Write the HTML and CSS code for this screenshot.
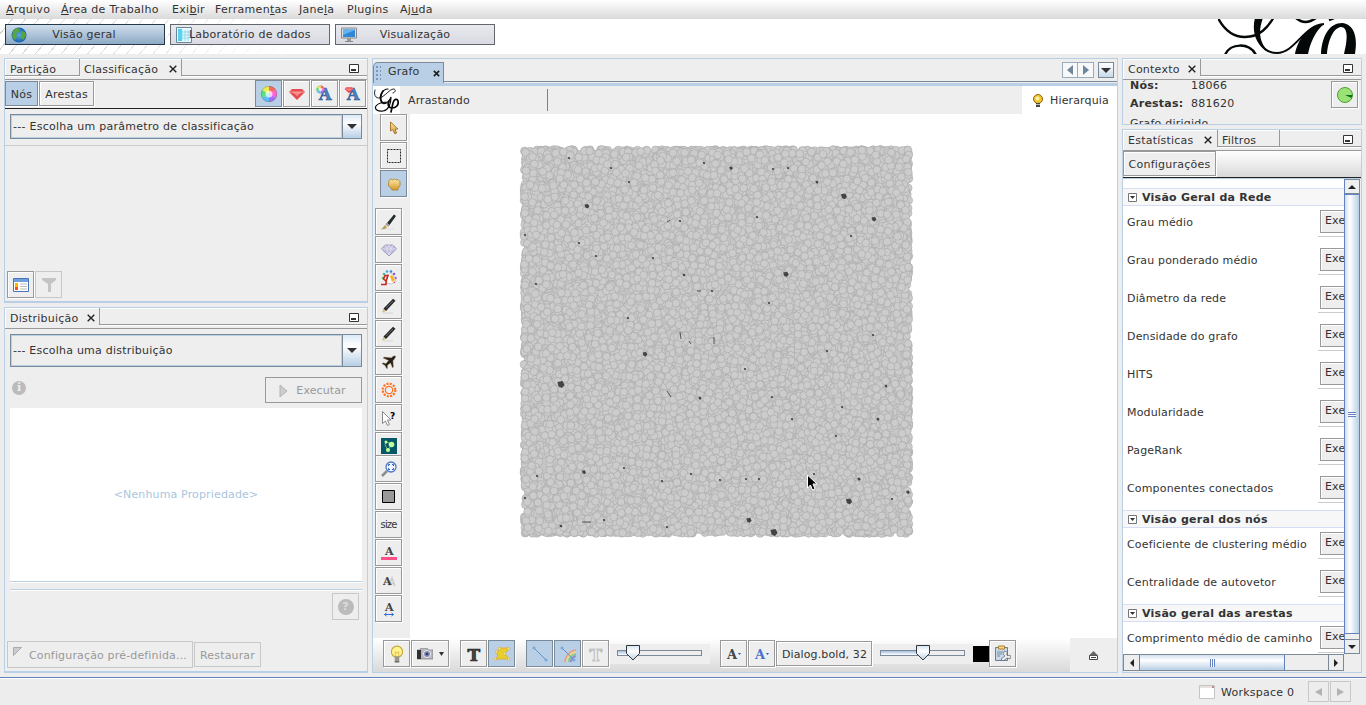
FILE: index.html
```html
<!DOCTYPE html>
<html lang="pt">
<head>
<meta charset="utf-8">
<title>Gephi</title>
<link rel="stylesheet" href="styles.css">
</head>
<body>
<svg class="sprite" width="0" height="0">
  <defs>
    <linearGradient id="gold" x1="0" y1="0" x2="0" y2="1"><stop offset="0" stop-color="#fbe9a8"/><stop offset="1" stop-color="#d39a2c"/></linearGradient>
    <linearGradient id="thumb" x1="0" y1="0" x2="0" y2="1"><stop offset="0" stop-color="#d4e3f2"/><stop offset=".4" stop-color="#fff"/><stop offset="1" stop-color="#b8cfe5"/></linearGradient>
    <radialGradient id="globe"><stop offset="0" stop-color="#58a8ea"/><stop offset="1" stop-color="#1762ad"/></radialGradient>
  </defs>
  <symbol id="pencil" viewBox="0 0 16 16"><path d="M2 15h10" stroke="#d5d5d5"/><path d="M1 14.500l1.500-4 2.500 2.500z" fill="#d8bd72"/><path d="M2.500 10.500L12 .8l2.500 2L5 13z" fill="#282a2c"/><path d="M5 10l7-7" stroke="#666"/></symbol>
  <symbol id="bulb" viewBox="0 0 16 16"><circle cx="8" cy="6" r="5" fill="#fff38b" stroke="#c5a83e"/><path d="M6 10h4v5H6z" fill="#99978c"/><path d="M6.500 10V6l1.500 1 1.500-1v4" fill="none" stroke="#e0b040" stroke-width=".7"/><path d="M6 15h4" stroke="#555"/></symbol>
  <symbol id="darkbulb" viewBox="0 0 14 14"><circle cx="7" cy="5" r="4.500" fill="#f3c42d" stroke="#8d6711"/><circle cx="6.500" cy="4.500" r="2" fill="#fff2a0"/><path d="M5 9h4v4H5z" fill="#484848"/><path d="M5 10.500h4" stroke="#bbb"/></symbol>
  <symbol id="wheel" viewBox="0 0 18 18"><path fill="#ff655e" d="M9 9V1a8 8 0 0 1 7 4z"/><path fill="#ff60dc" d="M9 9l7-4a8 8 0 0 1 0 8z"/><path fill="#a66cff" d="M9 9l7 4a8 8 0 0 1-7 4z"/><path fill="#59bfff" d="M9 9v8a8 8 0 0 1-7-4z"/><path fill="#51e581" d="M9 9l-7 4a8 8 0 0 1 0-8z"/><path fill="#eaf04d" d="M9 9L2 5a8 8 0 0 1 7-4z"/><circle cx="9" cy="9" r="3.500" fill="#fff" opacity=".7"/><circle cx="9" cy="9" r="7.700" fill="none" stroke="#777" stroke-width=".5"/></symbol>
  <symbol id="ruby" viewBox="0 0 18 18"><path d="M4 4h10l3 3-8 8-8-8z" fill="#e84b50"/><path d="M4 7h10l-5 4z" fill="#f58a86"/><path d="M1.500 7h15" stroke="#ffc0b8" fill="none" stroke-width=".7"/></symbol>
  <symbol id="minwin" viewBox="0 0 10 9"><path d="M.5.5h9v8h-9z" fill="#fff" stroke="#333"/><path d="M2 6h5" stroke="#333" stroke-width="2"/></symbol>
  <symbol id="cross" viewBox="0 0 8 8"><path d="M.7.7l6.600 6.600M7.300.7L.7 7.300" stroke="#222" stroke-width="1.400"/></symbol>
  <symbol id="down" viewBox="0 0 10 5"><path d="M0 0h10L5 5z" fill="#333"/></symbol>
  <symbol id="slider" viewBox="0 0 16 17"><path d="M1.500 1.500h13v8L8 16 1.500 9.500z" fill="url(#thumb)" stroke="#30363c"/></symbol>
  <symbol id="fold" viewBox="0 0 9 9"><path d="M.5.5h8v8h-8z" fill="#fff" stroke="#777"/><path d="M2 3h5L4.500 6z" fill="#333"/></symbol>
</svg>

<nav class="menu"><span class="m1"><u>A</u>rquivo</span><span class="m2"><u>Á</u>rea de Trabalho</span><span class="m3">Exi<u>b</u>ir</span><span class="m4">Ferramen<u>t</u>as</span><span class="m5">Jane<u>l</u>a</span><span class="m6">Plugins</span><span class="m7">Aj<u>u</u>da</span></nav>

<header class="banner">
  <div class="perspective active"><svg width="16" height="16" viewBox="0 0 16 16"><circle cx="8" cy="8" r="7.500" fill="url(#globe)"/><path d="M2 4l3-3 4 1-1 3-3 2 1 3-2 3-3-3z M10 4l4 1 1 4-3 4-3-3 2-2z" fill="#58a63f"/></svg><span>Visão geral</span></div>
  <div class="perspective"><svg width="16" height="16" viewBox="0 0 16 16"><path d="M.5.500h15v15H.5z" fill="#e8faff" stroke="#6a8796"/><path d="M2 2h4v12H2z" fill="#4fcdf2"/><path d="M6 3v11M9 3v11M12 3v11M2 5h12M2 8h12M2 11h12" stroke="#7fd5eb" stroke-width=".8"/></svg><span>Laboratório de dados</span></div>
  <div class="perspective"><svg width="16" height="16" viewBox="0 0 16 16"><path d="M.5 1h15v10H.5z" fill="#ddd" stroke="#888"/><path d="M2 2h12v8H2z" fill="#2e88d5"/><path d="M2 8l12-5V2H2z" fill="#67b4ee"/><path d="M6 11h4v3H6z" fill="#999"/><path d="M4 14.500h8" stroke="#888"/></svg><span>Visualização</span></div>
  <svg class="brand" width="148" height="35" viewBox="0 0 148 35" fill="none" stroke="#050808">
    <path d="M0-1Q10 18 27 18C42 18 50 8 56-2" stroke-width="2.300"/>
    <path d="M40-2C34 14 42 34 59 34C77 34 86 6 106 5" stroke-width="2"/>
    <path d="M37-1H45C40 12 41 24 51 33C36 26 34 10 37-1z" fill="#050808" stroke="none"/>
    <path d="M7 36C12 24 31 23 38 36" stroke-width="2.500"/>
    <path d="M78-1Q87 7 98-1M111 1l5-2" stroke-width="2.500"/>
    <path d="M77 35C80 19 91 7 106 5C97 12 92 25 90 35z" fill="#050808" stroke="none"/>
    <path d="M103 35C104 16 112 4 124 4C136 5 140 18 137 35H126C130 20 130 8 123 8C115 9 110 22 109 35z" fill="#050808" stroke="none"/>
  </svg>
</header>

<main class="workspace">
  <div class="col left">
    <section class="panel ranking">
      <div class="tabs"><div class="tab off t-part"><span>Partição</span></div><div class="tab t-class"><span>Classificação</span><svg width="8" height="8"><use href="#cross"/></svg></div><div class="tabfill"><svg width="10" height="9"><use href="#minwin"/></svg></div></div>
      <div class="modes"><button class="btn on nos">Nós</button><button class="btn arestas">Arestas</button><i class="grow"></i>
        <button class="btn ic on"><svg width="18" height="18"><use href="#wheel"/></svg></button><button class="btn ic"><svg width="18" height="18"><use href="#ruby"/></svg></button><button class="btn ic"><svg width="20" height="20" viewBox="0 0 20 20"><text x="4" y="16" class="bigA">A</text><use href="#wheel" x="1" y="1" width="9" height="9"/></svg></button><button class="btn ic"><svg width="20" height="20" viewBox="0 0 20 20"><text x="4" y="16" class="bigA">A</text><use href="#ruby" x="1" y="1" width="10" height="10"/></svg></button></div>
      <div class="combo c1"><span>--- Escolha um parâmetro de classificação</span><i><svg width="10" height="5"><use href="#down"/></svg></i></div>
      <div class="rankbody"><button class="btn ic"><svg width="16" height="14" viewBox="0 0 16 14"><path d="M.5.5h15v13H.5z" fill="#fff" stroke="#4773b8"/><path d="M1 1h14v3H1z" fill="#6e9fdf"/><path d="M2 5h3v7H2z" fill="#ffb500"/><path d="M2 9h3v3H2z" fill="#ff4d20"/><path d="M7 6h7M7 8.500h7M7 11h7" stroke="#bbb"/></svg></button><button class="btn ic dis"><svg width="14" height="16" viewBox="0 0 14 16"><path d="M0 1h14v2L9 7v8H6V7L0 3z" fill="#c4c4c4"/></svg></button></div>
    </section>
    <section class="panel dist">
      <div class="tabs"><div class="tab t-dist"><span>Distribuição</span><svg width="8" height="8"><use href="#cross"/></svg></div><div class="tabfill"><svg width="10" height="9"><use href="#minwin"/></svg></div></div>
      <div class="combo c2"><span>--- Escolha uma distribuição</span><i><svg width="10" height="5"><use href="#down"/></svg></i></div>
      <div class="runrow"><b class="round">i</b><button class="btn run"><svg width="9" height="14" viewBox="0 0 9 14"><path d="M1 1l7 6-7 6z" fill="#ccc" stroke="#b4b4b4"/></svg>Executar</button></div>
      <div class="props"><span>&lt;Nenhuma Propriedade&gt;</span></div>
      <div class="rule"></div>
      <div class="helprow"><button class="btn ic dis"><b class="round q">?</b></button></div>
      <div class="presets"><button class="btn dis preset"><svg width="9" height="9" viewBox="0 0 9 9"><path d="M.5.5h8l-8 8z" fill="#ccc" stroke="#aaa"/></svg><span>Configuração pré-definida...</span></button><button class="btn dis restore">Restaurar</button></div>
    </section>
  </div>

  <section class="panel graph">
    <div class="gtabs"><div class="gtab"><i class="grip"></i><span>Grafo</span><svg width="7" height="7" viewBox="0 0 8 8"><path d="M1 1l6 6M7 1L1 7" stroke="#222" stroke-width="2"/></svg></div><i class="grow gline"></i><div class="arrows gline"><i><svg width="6" height="10" viewBox="0 0 6 10"><path d="M6 0v10L0 5z" fill="#71879b"/></svg></i><i><svg width="6" height="10" viewBox="0 0 6 10"><path d="M0 0v10l6-5z" fill="#71879b"/></svg></i><i class="last"><svg width="10" height="5"><use href="#down"/></svg></i></div></div>
    <div class="gbar"><div class="glogo"><svg width="25" height="26" viewBox="0 0 25 26" fill="none" stroke="#080808" stroke-linecap="round"><path d="M1 2C-1 8 3 12 8 9C13 6 15 2 19 1C23 1 21 5 19 5" stroke-width=".9"/><path d="M14 1C8 1 5 9 7 13C9 18 15 15 17 9C17 15 15 22 9 23C4 24 0 21 2 18C4 15 10 14 15 14" stroke-width="1.200"/><path d="M9 3C6 7 6 12 8 14" stroke-width="1.700"/><path d="M15 13C13 17 15 20 18 20C22 20 25 17 24 13C23 10 20 11 19 15L17 24" stroke-width="1.700"/></svg></div><span class="drag">Arrastando</span><i class="sep"></i><i class="grow"></i><div class="hier"><svg width="14" height="14"><use href="#darkbulb"/></svg><span>Hierarquia</span></div></div>
    <div class="stage">
      <div class="tools">
        <div class="grp first">
          <button class="btn ic"><svg width="16" height="16" viewBox="0 0 16 16"><path d="M4.500 2v9l2-1.500 2.500 4.500 1.500-1L9 9h3z" fill="url(#gold)" stroke="#a77731"/></svg></button>
          <button class="btn ic"><svg width="16" height="16" viewBox="0 0 16 16"><path d="M1.500 1.500h13v13h-13z" fill="none" stroke="#222" stroke-dasharray="2 1"/></svg></button>
          <button class="btn ic on"><svg width="16" height="16" viewBox="0 0 16 16"><path d="M3 4.500l2-1.500 2 1 1.500-1 1.500 1 2-.5 2 2v4l-2 3v1.500H6l-1.500-2.500-2-1.500V8z" fill="url(#gold)" stroke="#af7c26" stroke-width=".8"/></svg></button>
        </div>
        <div class="grp second">
          <button class="btn ic"><svg width="16" height="16" viewBox="0 0 16 16"><path d="M4 15h9" stroke="#ddd"/><path d="M6 9l7-8.500 2 1.500-6.500 9z" fill="#252a2d"/><path d="M4 11l2 2-2 2-4 .5 2-2z" fill="#b99b54"/><path d="M5 9.500l3 2.500" stroke="#999" stroke-width="2"/></svg></button>
          <button class="btn ic"><svg width="16" height="16" viewBox="0 0 16 16"><path d="M4 3h8l3.500 4L8 14 .5 7z" fill="#c0bedb" stroke="#8784a3" stroke-width=".7"/><path d="M1 7h14M4 3l2 4 2-4 2 4 2-4M5.500 7L8 13l2.500-6" stroke="#e6e3f6" fill="none" stroke-width=".8"/></svg></button>
          <button class="btn ic"><svg width="16" height="16" viewBox="0 0 16 16"><g><circle cx="2" cy="8" r="1.300" fill="#59cf5b"/><circle cx="3" cy="4" r="1.300" fill="#3cbcab"/><circle cx="6" cy="1.500" r="1.300" fill="#3caed9"/><circle cx="10" cy="1.500" r="1.300" fill="#4380dd"/><circle cx="13" cy="4" r="1.300" fill="#8657dd"/><circle cx="14.500" cy="8" r="1.300" fill="#c453d5"/><circle cx="13" cy="12" r="1.300" fill="#ef5595"/></g><path d="M5 6l5-3 5 7-4 4-5-1z" fill="#fff" stroke="#999" stroke-width=".5"/><path d="M9 6l2-1 3 5-3 2z" fill="#f3b321"/><path d="M0 14.500h5v-3l2-6H4L2.500 9 5 11" fill="none" stroke="#c82b26" stroke-width="1.600"/></svg></button>
          <button class="btn ic"><svg width="16" height="16"><use href="#pencil"/></svg></button>
          <button class="btn ic"><svg width="16" height="16"><use href="#pencil"/></svg></button>
          <button class="btn ic"><svg width="16" height="16" viewBox="0 0 16 16"><path d="M14.500 2c-1.500-.8-3 .5-4 1.800L3 3 2 4l5.500 2.500L5 9.500l-3-.8-1 1 3 1.800 1.500 3h1l0-3.200 3-2.300 2 5 1-1-.5-6.200C14 4.500 15 3 14.500 2z" fill="#252019" stroke="#c7a66c" stroke-width=".4"/></svg></button>
          <button class="btn ic"><svg width="16" height="16" viewBox="0 0 16 16" fill="none" stroke="#ff7021"><circle cx="8" cy="8" r="3.700" stroke-width="1.200"/><circle cx="8" cy="8" r="6.300" stroke-width="2.200" stroke-dasharray="2 1.300"/></svg></button>
          <button class="btn ic"><svg width="18" height="18" viewBox="0 0 18 18"><path d="M2.500 2.500v12l3-2.500 2 4.500 2-1-2-4.500h3.500z" fill="#fff" stroke="#888"/><text x="10" y="9.500" class="qmark">?</text></svg></button>
          <button class="btn ic cut"><svg width="16" height="16" viewBox="0 0 16 16"><path d="M0 0h16v16H0z" fill="#075867"/><path d="M5 4l6 2-4 6-3-5z" stroke="#9fcf97" fill="none" stroke-width=".7"/><circle cx="5" cy="4" r="1.500" fill="#bfff9a"/><circle cx="10.500" cy="6.500" r="2.800" fill="#bfff9a"/><circle cx="7" cy="12" r="2" fill="#bfff9a"/></svg></button>
          <button class="btn ic"><svg width="16" height="16" viewBox="0 0 16 16"><path d="M1 15l5-5" stroke="#8b8b93" stroke-width="2.500"/><circle cx="10" cy="6" r="5" fill="#eef5ff" stroke="#5478c7" stroke-width="1.300"/><path d="M7.500 5V3.500H9M11 3.500h1.500V5M12.500 7v1.500H11M9 8.500H7.500V7" fill="none" stroke="#235dcc"/></svg></button>
          <button class="btn ic"><svg width="13" height="13" viewBox="0 0 13 13"><path d="M.5.500h12v12H.5z" fill="#999" stroke="#000"/></svg></button>
          <button class="btn ic sizeb">size</button>
          <button class="btn ic"><svg width="16" height="16" viewBox="0 0 16 16"><text x="4" y="10" class="serifA">A</text><path d="M0 12h16v3H0z" fill="#ff4f87"/></svg></button>
          <button class="btn ic"><svg width="16" height="16" viewBox="0 0 16 16"><path d="M8 13l3-8 3 8M9 10.500h4" stroke="#ccc" stroke-width="1.500" fill="none"/><text x="2" y="12" class="serifA">A</text></svg></button>
          <button class="btn ic"><svg width="16" height="16" viewBox="0 0 16 16"><text x="4" y="10" class="serifA">A</text><path d="M3.500 13.500h9M5.500 12l-2 1.500 2 1.500M10.500 12l2 1.500-2 1.500" stroke="#316bd2" fill="none"/></svg></button>
        </div>
      </div>
      <div class="viewport"><canvas id="net" width="400" height="400"></canvas><svg class="pointer" width="14" height="18" viewBox="0 0 14 18"><path d="M1.500 1v13l3-3 2 5 2.500-1-2-5h4z" stroke="#fff" stroke-width="1"/></svg></div>
    </div>
    <div class="bottombar">
      <button class="btn ic"><svg width="18" height="18"><use href="#bulb"/></svg></button><button class="btn camera"><svg width="16" height="12" viewBox="0 0 16 12"><path d="M0 2h3l1-2h6l1 2h5v9H0z" fill="#b9b9bf" stroke="#76767c" stroke-width=".7"/><path d="M0 2h4v9H0z" fill="#303034"/><circle cx="10" cy="6" r="3.500" fill="#7d85a2" stroke="#ececf3"/><circle cx="10" cy="6" r="1.300" fill="#2a3c92"/></svg><svg width="5" height="4" viewBox="0 0 10 5" preserveAspectRatio="none"><use href="#down" width="10" height="5"/></svg></button>
      <button class="btn ic g1"><svg width="20" height="20" viewBox="0 0 20 20"><text x="3.500" y="16.500" class="bigT">T</text></svg></button><button class="btn ic on"><svg width="18" height="16" viewBox="0 0 18 16"><path d="M2 13h14l-4-5 4-6H6v3l-3 1 2 4z" fill="#e8cf2c" stroke="#dda829" stroke-width=".8"/><g fill="#fff0a0" stroke="#d9a02c" stroke-width=".6"><circle cx="2.500" cy="13" r="1.200"/><circle cx="3.500" cy="6" r="1.200"/><circle cx="6.500" cy="2.500" r="1.200"/><circle cx="15.500" cy="2.500" r="1.200"/><circle cx="11.500" cy="7.500" r="1.200"/><circle cx="15.500" cy="13" r="1.200"/></g></svg></button>
      <button class="btn ic on g1"><svg width="16" height="16" viewBox="0 0 16 16"><path d="M2 2l12 12" stroke="#5894cc"/><g fill="#fff" stroke="#5894cc"><circle cx="2" cy="2" r="1"/><circle cx="14" cy="14" r="1"/></g></svg></button><button class="btn ic on"><svg width="16" height="16" viewBox="0 0 16 16" fill="none"><path d="M5 16C5 11 9 5 16 4" stroke="#e99b8b" stroke-width="1.500"/><path d="M7 16c0-5 4-9 9-10" stroke="#ead887" stroke-width="2"/><path d="M9 16c0-4 3-7 7-8" stroke="#89ca9b" stroke-width="2"/><path d="M11 16c0-3 2-5 5-6" stroke="#9587d1" stroke-width="2"/><path d="M2 2l12 12" stroke="#5894cc"/><g fill="#fff" stroke="#5894cc"><circle cx="2" cy="2" r="1"/><circle cx="14" cy="14" r="1"/></g></svg></button><button class="btn ic"><svg width="20" height="20" viewBox="0 0 20 20"><text x="3.500" y="16.500" class="bigT ghost">T</text></svg></button>
      <div class="slide s1"><i></i><svg width="16" height="17"><use href="#slider"/></svg></div>
      <button class="btn ic g2"><svg width="18" height="18" viewBox="0 0 18 18"><text x="2" y="14" class="fontA">A</text><path d="M13 8h3l-1.500 2z" fill="#245acb"/></svg></button><button class="btn ic"><svg width="18" height="18" viewBox="0 0 18 18"><text x="2" y="14" class="fontA blue">A</text><path d="M13 8h3l-1.500 2z" fill="#245acb"/></svg></button><button class="btn fontname">Dialog.bold, 32</button>
      <div class="slide s2"><i></i><svg width="16" height="17"><use href="#slider"/></svg></div><i class="swatch"></i>
      <button class="btn ic"><svg width="17" height="17" viewBox="0 0 17 17"><path d="M1.500 2.500h12v13h-12z" fill="#c9d9e7" stroke="#677f91"/><path d="M4.500 1h6v3h-6z" fill="#f8df87" stroke="#ae802d"/><path d="M3 7h6M3 9h5M3 11h3" stroke="#738da1"/><path d="M10.500 6l-1.500 3 2 2-4 3 2 2 4-3 3 1 1-3-2-1-1 1-1.500-1.500 1-2z" fill="#eee" stroke="#59616a" stroke-width=".7"/></svg></button>
      <i class="grow"></i><div class="eject"><svg width="9" height="9" viewBox="0 0 9 9"><path d="M.5 4.500h8v4h-8z" fill="#fff" stroke="#444"/><path d="M0 4.500h9L4.500 0z" fill="#666"/><path d="M2 6.500h5" stroke="#444"/></svg></div>
    </div>
  </section>

  <div class="col right">
    <section class="panel context">
      <div class="tabs"><div class="tab t-ctx"><span>Contexto</span><svg width="8" height="8"><use href="#cross"/></svg></div><div class="tabfill"><svg width="10" height="9"><use href="#minwin"/></svg></div></div>
      <div class="ctx"><dl><dt>Nós:</dt><dd>18066</dd><dt>Arestas:</dt><dd>881620</dd><dt class="kind">Grafo dirigido</dt></dl><button class="btn ic"><svg width="18" height="18" viewBox="0 0 18 18"><circle cx="9" cy="9" r="7.500" fill="#9be276" stroke="#4c9d35"/><path d="M9 9h7.500l-1 3z" fill="#087018"/></svg></button></div>
    </section>
    <section class="panel stats">
      <div class="tabs"><div class="tab t-est"><span>Estatísticas</span><svg width="8" height="8"><use href="#cross"/></svg></div><div class="tab off t-fil"><span>Filtros</span></div><div class="tabfill"><svg width="10" height="9"><use href="#minwin"/></svg></div></div>
      <div class="cfg"><button class="btn">Configurações</button></div>
      <div class="scrollarea">
        <div class="list">
          <h3><svg width="9" height="9"><use href="#fold"/></svg>Visão Geral da Rede</h3>
          <div class="row"><span>Grau médio</span><b>Exe</b></div>
          <div class="row"><span>Grau ponderado médio</span><b>Exe</b></div>
          <div class="row"><span>Diâmetro da rede</span><b>Exe</b></div>
          <div class="row"><span>Densidade do grafo</span><b>Exe</b></div>
          <div class="row"><span>HITS</span><b>Exe</b></div>
          <div class="row"><span>Modularidade</span><b>Exe</b></div>
          <div class="row"><span>PageRank</span><b>Exe</b></div>
          <div class="row"><span>Componentes conectados</span><b>Exe</b></div>
          <h3><svg width="9" height="9"><use href="#fold"/></svg>Visão geral dos nós</h3>
          <div class="row"><span>Coeficiente de clustering médio</span><b>Exe</b></div>
          <div class="row"><span>Centralidade de autovetor</span><b>Exe</b></div>
          <h3><svg width="9" height="9"><use href="#fold"/></svg>Visão geral das arestas</h3>
          <div class="row"><span>Comprimento médio de caminho</span><b>Exe</b></div>
        </div>
        <div class="vbar"><i class="up"><svg width="8" height="4" viewBox="0 0 8 4"><path d="M0 4h8L4 0z" fill="#222"/></svg></i><i class="vthumb"><s></s></i><i class="vgap"></i><i class="dn"><svg width="8" height="4" viewBox="0 0 8 4"><path d="M0 0h8L4 4z" fill="#222"/></svg></i></div>
      </div>
      <div class="hbar"><i class="hb"><svg width="4" height="8" viewBox="0 0 4 8"><path d="M4 0v8L0 4z" fill="#222"/></svg></i><i class="hthumb"><s></s></i><i class="grow"></i><i class="hb"><svg width="4" height="8" viewBox="0 0 4 8"><path d="M0 0v8l4-4z" fill="#222"/></svg></i></div>
    </section>
  </div>
</main>

<footer class="status"><svg width="16" height="14" viewBox="0 0 16 14"><path d="M.5.500h15v13H.5z" fill="#fff" stroke="#c4c4c4"/><path d="M1 1h14v2H1z" fill="#e5e2e2"/><path d="M13 1h2v2h-2z" fill="#c88"/></svg><span>Workspace 0</span><div class="pager"><i><svg width="7" height="8" viewBox="0 0 7 8"><path d="M7 0v8L0 4z" fill="#b3b3b3"/></svg></i><i><svg width="7" height="8" viewBox="0 0 7 8"><path d="M0 0v8l7-4z" fill="#b3b3b3"/></svg></i></div></footer>
<script src="graph.js"></script>
</body>
</html>
```
FILE: styles.css
```css
* { box-sizing: border-box; }
body { margin: 0; width: 1366px; height: 705px; overflow: hidden; background: #ededed; color: #333; font: 11px/14px "DejaVu Sans", sans-serif; letter-spacing: .23px; display: flex; flex-direction: column; }
i, s { font-style: normal; text-decoration: none; }
svg { display: block; flex: none; }
.sprite { position: absolute; }
span, button, h3, dt, dd { white-space: nowrap; }
.grow { flex: 1; }

.menu { height: 19px; flex: none; display: flex; padding: 3px 0 0 6px; background: linear-gradient(#fff, #dadada); letter-spacing: .3px; }
.m1 { width: 55px; } .m2 { width: 111px; } .m3 { width: 43px; } .m4 { width: 84px; } .m5 { width: 48px; } .m6 { width: 53px; }

.banner { height: 35px; flex: none; display: flex; gap: 5px; padding: 5px 0 0 5px; background: linear-gradient(90deg, transparent, #fff 310px), repeating-linear-gradient(130deg, #fff 0 9px, #d2d2d2 9px 10px); }
.perspective { width: 160px; height: 21px; border: 1px solid #62666d; background: linear-gradient(#e9eaee, #d9dae2); display: flex; align-items: center; padding-left: 5px; }
.perspective span { flex: 1; text-align: center; padding-right: 21px; }
.perspective:nth-child(2) span { padding: 0; margin-left: -3px; text-align: left; }
.perspective.active { border-color: #26394b; background: linear-gradient(#cfdeeb, #8eaac6); }
.perspective.active span { padding-right: 23px; }
.brand { margin: -5px 0 0 auto; }

.workspace { height: 623px; flex: none; display: flex; padding: 4px 4px 4px; gap: 4px; }
.col { display: flex; flex-direction: column; gap: 4px; }
.left { width: 364px; } .right { width: 240px; flex: none; }
.graph { width: 746px; flex: none; }
.panel { border: 1px solid #b8cfe5; background: #eee; display: flex; flex-direction: column; overflow: hidden; }
.ranking { height: 245px; border-bottom-width: 2px; }
.dist { height: 366px; border-bottom-width: 2px; }
.context { height: 67px; flex: none; } .stats { height: 544px; }

.tabs { display: flex; height: 21px; flex: none; border-bottom: 1px solid #999; box-shadow: inset 1px 1px #fff; }
.tab { height: 17px; display: flex; align-items: center; justify-content: space-between; padding: 4px 5px 0 4px; border-right: 1px solid #999; }
.tab:first-child { padding-left: 5px; }
.tab.off { border-bottom: 1px solid #999; box-shadow: 0 1px #fff; padding-top: 5px; }
.tab svg { margin-top: -1px; }
.tabfill { flex: 1; height: 17px; border-bottom: 1px solid #999; box-shadow: 0 1px #fff; display: flex; justify-content: flex-end; padding: 5px 8px 0; }
.t-part { width: 75px; } .t-class { width: 102px; } .t-dist { width: 95px; } .t-ctx { width: 78px; } .t-est { width: 95px; } .t-fil { width: 62px; }
.t-dist svg, .t-class svg, .t-ctx svg { margin-right: -1px; }

.btn { font: inherit; letter-spacing: inherit; color: inherit; margin: 0; padding: 0; border: 1px solid #999; background: #eee; box-shadow: 1px 1px #fff, inset 1px 1px #fff; display: flex; align-items: center; justify-content: center; height: 26px; flex: none; }
.btn.ic { width: 27px; height: 27px; }
.btn.on { background: #b8cfe5; border-color: #7a8a99; box-shadow: 1px 1px #fff; }
.btn.dis { border-color: #c8c8c8; box-shadow: none; color: #999; }
.modes { height: 29px; flex: none; border-bottom: 1px solid #222; display: flex; gap: 1px; padding-right: 1px; }
.modes .nos, .modes .arestas { height: 25px; margin-top: 1px; padding-top: 2px; }
.nos { width: 33px; } .arestas { width: 55px; }
.bigA { font: bold 16px "DejaVu Serif", serif; fill: #4f83c2; stroke: #274f90; stroke-width: .6; letter-spacing: 0; }

.combo { flex: none; margin: 5px 5px 0; border: 1px solid #7a8a99; display: flex; width: 352px; }
.combo span { flex: 1; border: 1px solid #b8cfe5; display: flex; align-items: center; padding-left: 1px; }
.combo i { width: 19px; border-left: 1px solid #7a8a99; background: linear-gradient(#dce9f5, #fff 35%, #b8cfe5); display: flex; align-items: center; justify-content: center; }
.c1 { height: 25px; letter-spacing: .26px; } .c2 { height: 33px; }
.rankbody { margin-top: 6px; flex: 1; border-top: 1px solid #ccc; display: flex; gap: 1px; align-items: flex-end; padding: 0 0 3px 2px; }

.runrow { height: 41px; flex: none; display: flex; justify-content: space-between; padding: 10px 5px 0 7px; }
.round { width: 14px; height: 14px; margin-top: 4px; border-radius: 50%; background: #bbb; color: #eee; font: bold 11px/14px "DejaVu Serif", serif; text-align: center; letter-spacing: 0; }
.round.q { width: 16px; height: 16px; line-height: 16px; margin: 0; font-family: "DejaVu Sans", sans-serif; color: #ddd; }
.run { width: 97px; gap: 8px; color: #999; box-shadow: none; letter-spacing: .1px; padding: 1px 2px 0 0; }
.props { height: 174px; flex: none; margin: 0 5px; background: #fff; border-bottom: 1px solid #b8cfe5; color: #a9c5de; display: flex; align-items: center; justify-content: center; letter-spacing: .15px; }
.rule { height: 8px; flex: none; margin: 0 5px; border-top: 1px solid #fff; border-bottom: 1px solid #b8cfe5; box-shadow: 0 1px #fff; }
.helprow { height: 50px; flex: none; display: flex; justify-content: flex-end; padding: 3px 8px 0; }
.presets { display: flex; gap: 1px; padding: 1px 0 0 2px; letter-spacing: .16px; }
.preset { width: 186px; height: 27px; justify-content: flex-start; align-items: center; padding: 2px 0 0 5px; gap: 7px; }
.preset svg { margin-bottom: 9px; }
.restore { width: 67px; height: 25px; margin-top: 1px; padding-top: 2px; }

.gtabs { height: 27px; flex: none; border-bottom: 3px solid #b8cfe5; display: flex; align-items: flex-end; }
.gtab { height: 21px; width: 71px; background: #b8cfe5; border: 1px solid #7a8a99; border-bottom: 0; border-top-left-radius: 5px; display: flex; align-items: center; padding: 0 3px 0 2px; }
.gtab span { flex: 1; padding-left: 7px; margin-top: -2px; } .grip { width: 5px; height: 14px; background: radial-gradient(circle at 1px 1px, #7b99bc 1px, transparent 1px) 0 0/4px 4px; }
.gline { border-bottom: 1px solid #7a8a99; margin-bottom: 1px; height: 20px; }
.arrows { display: flex; padding-right: 3px; }
.arrows i { width: 16px; height: 16px; border: 1px solid #9aacbc; margin-left: 0; background: #f6f8fa; display: flex; align-items: center; justify-content: center; }
.arrows i + i { border-left: 0; } .arrows i.last { border: 1px solid #7a8a99; margin-left: 4px; background: linear-gradient(#fff, #c8daea); }
.gbar { height: 28px; flex: none; display: flex; align-items: center; }
.glogo { width: 27px; height: 28px; background: #fff; padding: 2px 1px 0; }
.drag { padding: 2px 0 0 8px; width: 147px; letter-spacing: .12px; } .sep { width: 1px; height: 22px; background: #6382bf; }
.hier { width: 95px; height: 28px; background: #fff; display: flex; align-items: center; padding: 1px 0 0 9px; gap: 5px; letter-spacing: .15px; }
.stage { height: 524px; flex: none; display: flex; }
.tools { width: 37px; flex: none; }
.grp { display: flex; flex-direction: column; gap: 1px; }
.grp.first { padding-left: 7px; } .grp.second { padding: 11px 0 0 2px; }
.cut { margin-bottom: -5px; }
.sizeb { font: 10px "DejaVu Sans", sans-serif; letter-spacing: -.9px; }
.qmark { font: bold 9px "DejaVu Sans", sans-serif; letter-spacing: 0; }
.serifA { font: bold 11px "DejaVu Serif", serif; fill: #444; letter-spacing: 0; }
.viewport { flex: 1; background: #fff; position: relative; }
#net { position: absolute; left: 106px; top: 27px; }
.pointer { position: absolute; left: 396px; top: 360px; }

.bottombar { height: 34px; flex: none; display: flex; padding: 2px 0 0 10px; background: linear-gradient(#fff, #d9d9d9); gap: 1px; }
.camera { width: 38px; height: 27px; gap: 6px; } .g1 { margin-left: 10px; }
.bigT { font: bold 17px "DejaVu Serif", serif; fill: #444; stroke: #222; stroke-width: .7; letter-spacing: 0; } .ghost { fill: #eee; stroke: #aaa; }
.slide { width: 100px; height: 20px; margin-top: 4px; background: #eee; position: relative; padding: 6px 8px 0 7px; }
.slide i { display: block; height: 6px; border: 1px solid #7a8a99; background: linear-gradient(#b8cfe5, #fff); }
.slide svg { position: absolute; top: 0; }
.s1 svg { left: 15px; } .s2 svg { left: 42px; }
.s1 i { background: linear-gradient(90deg, transparent 16px, #eee 16px), linear-gradient(#a3bfe0, #fff); } .s2 i { background: linear-gradient(90deg, transparent 45px, #eee 45px), linear-gradient(#a3bfe0, #fff); }
.g2 { margin-left: 9px; } .fontA { font: bold 13px "DejaVu Serif", serif; letter-spacing: 0; fill: #444; } .blue { fill: #4b72ce; }
.fontname { width: 96px; height: 25px; margin-top: 1px; padding: 2px 0 0 1px; letter-spacing: .12px; }
.s2 { margin-right: -1px; } .swatch { width: 16px; height: 16px; margin: 6px -1px 0 0; background: #000; }
.eject { width: 47px; height: 34px; margin-top: -2px; background: #eee; display: flex; align-items: center; justify-content: center; }

.ctx { display: flex; justify-content: space-between; padding: 1px 3px 0 7px; }
dl { margin: -3px 0 0; display: grid; grid-template-columns: 61px 50px; grid-auto-rows: 18px; line-height: 16px; }
dt { font-weight: bold; } dd { margin: 0; } dt.kind { font-weight: normal; padding-top: 2px; }
.cfg { height: 27px; flex: none; border-bottom: 1px solid #222; background: linear-gradient(#fff, #d9d9d9); }
.cfg .btn { width: 93px; height: 25px; padding-top: 2px; }
.scrollarea { height: 476px; flex: none; display: flex; border-top: 1px solid #b8cfe5; }
.list { width: 221px; flex: none; background: #fff; overflow: hidden; padding-top: 9px; letter-spacing: .16px; }
.list h3 { margin: 0; font-size: 11px; line-height: 16px; letter-spacing: .25px; height: 18px; border-top: 1px solid #d5def4; border-bottom: 1px solid #d5def4; background: #f7f7f7; display: flex; align-items: center; gap: 5px; padding: 1px 0 0 5px; }
.row { height: 38px; display: flex; justify-content: space-between; padding: 9px 0 0 4px; }
.row span { padding-top: 1px; }
.row b { font-weight: normal; width: 26px; height: 27px; margin: -5px 0 0; padding: 4px 0 0 7px; border-bottom: 1px solid #ccc; flex: none; position: relative; isolation: isolate; }
.row b::before { content: ""; position: absolute; left: 2px; top: 0; width: 30px; height: 21px; border: 1px solid #999; box-shadow: inset 1px 1px #fff; background: #eee; z-index: -1; }
.vbar { width: 16px; display: flex; flex-direction: column; border-left: 1px solid #6382bf; }
.vbar i { display: flex; align-items: center; justify-content: center; border: 1px solid #7a8a99; border-left: 0; background: #eee; }
.up { height: 15px; } .vbar .vthumb { height: 440px; border-color: #6382bf; background: linear-gradient(90deg, #d0e0f0, #fff 35%, #b8cfe5); } .vbar .vgap { height: 5px; border-width: 0 1px 0 0; } .vbar .dn { height: 15px; }
.vthumb s { width: 8px; height: 5px; background: repeating-linear-gradient(#6382bf 0 1px, #fff 1px 2px); }
.hbar { height: 17px; width: 221px; display: flex; border: 1px solid #7a8a99; }
.hb { width: 15px; display: flex; align-items: center; justify-content: center; } .hb:last-child { border-left: 1px solid #7a8a99; }
.hthumb { width: 146px; border: solid #6382bf; border-width: 0 1px; background: linear-gradient(#d0e0f0, #fff 35%, #b8cfe5); display: flex; align-items: center; justify-content: center; }
.hthumb s { width: 5px; height: 8px; background: repeating-linear-gradient(90deg, #6382bf 0 1px, #fff 1px 2px); }

.status { flex: 1; border-top: 1px solid #6382bf; box-shadow: inset 0 1px #fff; display: flex; align-items: center; padding-left: 1199px; }
.status span { padding: 2px 0 0 6px; width: 93px; }
.pager { display: flex; gap: 1px; } .pager i { width: 21px; height: 21px; border: 1px solid #c8c8c8; display: flex; align-items: center; justify-content: center; }
```
FILE: graph.js
```js
// Draws the node cloud: a square packed with overlapping discs.
const c = document.getElementById('net').getContext('2d');
let seed = 7;
const rnd = () => (seed = (seed * 16807) % 2147483647) / 2147483647;
// The canvas origin is at (516, 141) of the window.
const X0 = 516, Y0 = 141;
c.fillStyle = '#c6c6c6';
c.fillRect(8, 9, 384, 383);
const disc = (x, y) => {
  c.beginPath();
  c.arc(x, y, 3.9, 0, 7);
  c.fillStyle = '#cccccc';
  c.fill();
  c.strokeStyle = 'rgba(160,160,160,.6)';
  c.lineWidth = 0.8;
  c.stroke();
};
// Rim discs first, so the inner ones cover them irregularly.
for (let i = 0; i < 130; i++) {
  disc(8.5 + rnd() * 384, 8.5 + rnd() * 2); disc(8.5 + rnd() * 384, 390.5 + rnd() * 2);
  disc(8 + rnd() * 2, 8.5 + rnd() * 384); disc(391 + rnd() * 2, 8.5 + rnd() * 384);
}
for (let i = 0; i < 9500; i++) disc(8.5 + rnd() * 384, 9 + rnd() * 383);
const gaps = [[561,384,3],[587,206,2],[844,196,2.5],[874,219,2],[786,274,2.3],[849,501,2.6],[749,520,2.2],[774,532,3],[645,354,2],[584,472,1.7],[731,168,1.5],[773,169,1],[788,168,1],[817,182,1.3],[704,163,1],[629,182,1],[579,243,1],[536,284,1],[684,275,1.2],[712,291,1],[769,303,1],[700,398,1.3],[772,397,1],[886,386,1.2],[792,419,1],[836,436,1],[878,419,1.3],[842,407,1],[759,479,1],[720,480,1],[746,479,1],[859,479,1.4],[814,474,1],[892,499,1],[908,492,1.5],[667,527,1],[561,526,1.2],[604,520,1],[525,498,1],[537,476,1],[624,468,1],[662,481,1],[691,474,1],[525,235,1],[680,221,1],[757,217,1],[596,256,1],[653,258,1],[628,318,1],[851,236,1],[873,335,1],[827,351,1],[745,369,1],[611,168,1],[569,158,1]];
c.fillStyle = '#444';
for (const [x, y, r] of gaps) {
  c.beginPath();
  c.moveTo(x - X0 - r * 1.2, y - Y0 - r * .7);
  c.lineTo(x - X0 + r * .5, y - Y0 - r);
  c.lineTo(x - X0 + r * 1.2, y - Y0 + r * .3);
  c.lineTo(x - X0 + r * .3, y - Y0 + r * 1.3);
  c.lineTo(x - X0 - r * .8, y - Y0 + r * .8);
  c.fill();
}
c.strokeStyle = '#555';
c.lineWidth = 1;
for (const [x, y, dx, dy] of [[680,332,1,7],[689,341,2,3],[667,391,4,6],[714,337,0,7],[582,522,9,0],[667,222,3,-2],[697,291,4,0]]) {
  c.beginPath(); c.moveTo(x - X0, y - Y0); c.lineTo(x - X0 + dx, y - Y0 + dy); c.stroke();
}
```
